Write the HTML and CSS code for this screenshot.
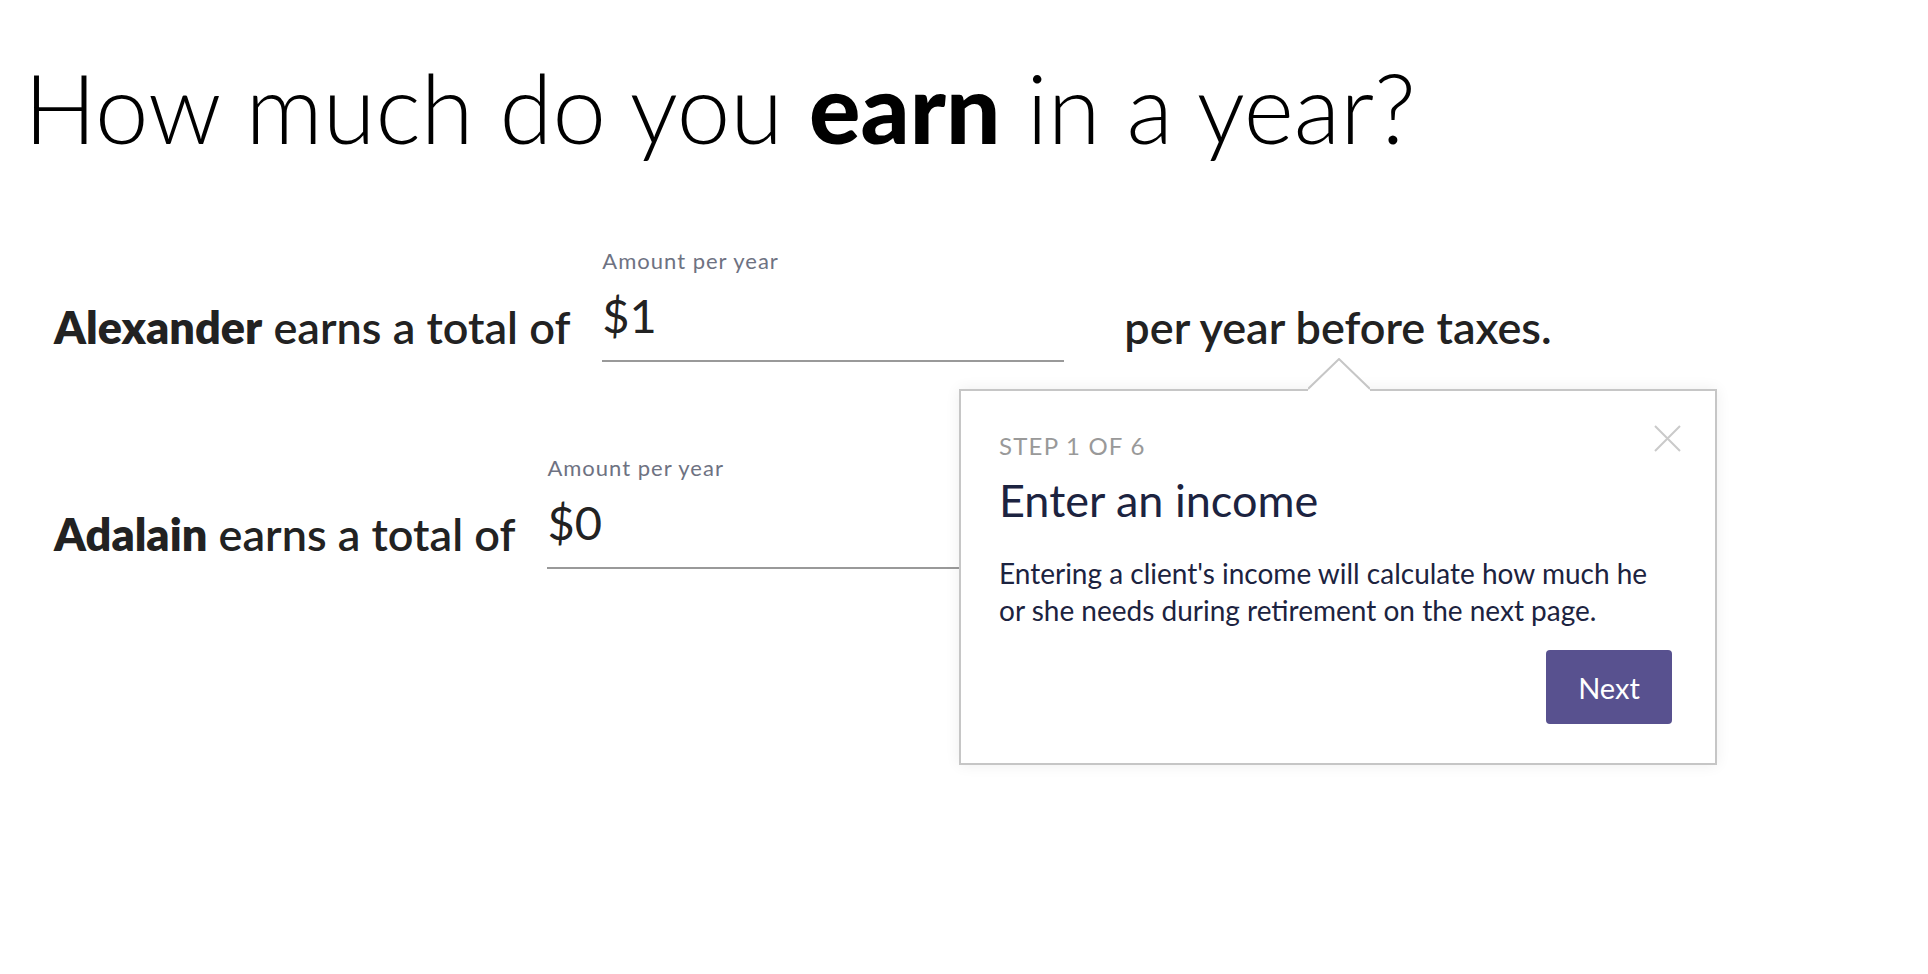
FILE: index.html
```html
<!DOCTYPE html>
<html lang="en">

<head>
    <meta charset="utf-8">
    <title>Income</title>
    <link rel="stylesheet" href="styles.css">
</head>

<body>
    <main class="page">
        <h1 class="title">How much do you <strong>earn</strong> in a year?</h1>

        <!-- eine Zeile pro Person -->
        <div class="income-row">
            <span class="sentence"><b>Alexander</b> earns a total of</span>
            <label class="field">
                <span class="field-label">Amount per year</span>
                <input class="field-input" type="text" value="$1">
            </label>
            <span class="sentence">per year before taxes.</span>
        </div>

        <div class="income-row">
            <span class="sentence"><b>Adalain</b> earns a total of</span>
            <label class="field">
                <span class="field-label">Amount per year</span>
                <input class="field-input" type="text" value="$0">
            </label>
        </div>

        <!-- Tour-Hinweis, liegt über dem Formular -->
        <div class="tour">
            <svg class="tour-arrow" width="62" height="33" viewBox="0 0 62 33">
                <polygon points="0,33 0,31 31,1 62,31 62,33" fill="#fff"/>
                <polyline points="0,31 31,1 62,31" fill="none" stroke="#c6c6c6" stroke-width="2"/>
            </svg>
            <button class="tour-close" type="button" aria-label="Close">
                <svg width="27" height="27" viewBox="0 0 27 27">
                    <path d="M1 1 L26 26 M26 1 L1 26" stroke="#cacaca" stroke-width="2" fill="none"/>
                </svg>
            </button>
            <div class="tour-step">STEP 1 OF 6</div>
            <h2 class="tour-title">Enter an income</h2>
            <p class="tour-text">Entering a client's income will calculate how much he or she needs during retirement on the next page.</p>
            <div class="tour-actions">
                <button class="tour-next" type="button">Next</button>
            </div>
        </div>
    </main>
</body>

</html>
```

FILE: styles.css
```css
html,
body {
    margin: 0;
    background: #fff;
    font-family: Lato, "Noto Sans", sans-serif;
}

.page {
    position: relative;
    min-height: 100vh;
    box-sizing: border-box;
    padding: 49px 24px 0 54px;
}

.title {
    margin: 0 0 85px -30px;
    font-size: 96px;
    line-height: 1.2;
    font-weight: 300;
    color: #000;
    white-space: nowrap;
}

.title strong {
    font-weight: 900;
}

.income-row {
    display: flex;
    align-items: flex-end;
    margin-bottom: 94px;
}

.sentence {
    font-size: 45px;
    line-height: 1.2;
    font-weight: 600;
    color: #222;
    padding-bottom: 8px;
    white-space: nowrap;
}

.sentence b {
    font-weight: 800;
}

.field {
    display: flex;
    flex-direction: column;
    width: 462px;
    margin: 0 60px 0 32px;
}

.field-label {
    font-size: 22px;
    line-height: 24px;
    letter-spacing: 1px;
    color: #6e7282;
}

.field-input {
    margin-top: 15px;
    height: 55px;
    padding: 0 0 17px;
    border: 0;
    border-bottom: 2px solid #999;
    font-family: inherit;
    font-size: 47px;
    line-height: 55px;
    color: #222;
    background: transparent;
    outline: none;
}

.tour {
    position: absolute;
    left: 959px;
    top: 389px;
    width: 758px;
    height: 376px;
    box-sizing: border-box;
    padding: 41px 43px 39px 38px;
    background: #fff;
    border: 2px solid #c6c6c6;
    box-shadow: 0 0 14px rgba(0, 0, 0, 0.07);
    display: flex;
    flex-direction: column;
}

.tour-arrow {
    position: absolute;
    left: 347px;
    top: -33px;
}

.tour-close {
    position: absolute;
    right: 34px;
    top: 34px;
    padding: 0;
    border: 0;
    background: none;
    width: 27px;
    height: 27px;
}

.tour-step {
    font-size: 24px;
    line-height: 28px;
    letter-spacing: 1.2px;
    color: #999;
}

.tour-title {
    margin: 14px 0 0;
    font-size: 45px;
    line-height: 52px;
    font-weight: 400;
    color: #1c2340;
}

.tour-text {
    margin: 29px 0 0;
    font-size: 28px;
    line-height: 37px;
    color: #1c2340;
}

.tour-actions {
    display: flex;
    justify-content: flex-end;
    margin-top: auto;
}

.tour-next {
    width: 126px;
    height: 74px;
    border: 0;
    border-radius: 4px;
    background: #58518f;
    color: #fff;
    font-family: inherit;
    font-size: 29px;
}
```
